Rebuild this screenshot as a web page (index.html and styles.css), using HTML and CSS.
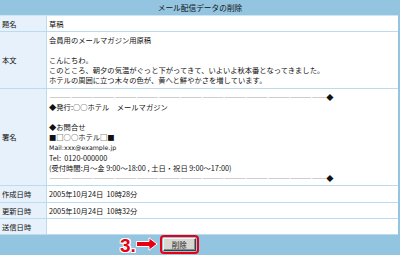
FILE: index.html
```html
<!DOCTYPE html>
<html lang="ja">
<head>
<meta charset="utf-8">
<link rel="stylesheet" href="styles.css">
</head>
<body>
<div class="panel">
  <div class="title">メール配信データの削除</div>
  <div class="grid">
    <div class="lbl">題名</div>
    <div class="val">草稿</div>

    <div class="lbl">本文</div>
    <div class="val">会員用のメールマガジン用原稿<br><br>こんにちわ。<br>このところ、朝夕の気温がぐっと下がってきて、いよいよ秋本番となってきました。<br>ホテルの周囲に立つ木々の色が、黄へと鮮やかさを増しています。</div>

    <div class="lbl">署名</div>
    <div class="val"><span class="rule">――――――――――――――――――――――――――――――――――――――<b>◆</b></span><br>◆発行:○○ホテル　メールマガジン<br><br>◆お問合せ<br>■□○○ホテル□■<br><span class="latin">Mail:xxx@example.jp</span><br>Tel:&nbsp; 0120-000000<br>(受付時間:月～金 9:00～18:00 , 土日・祝日 9:00～17:00)<br><span class="rule">――――――――――――――――――――――――――――――――――――――<b>◆</b></span></div>

    <div class="lbl">作成日時</div>
    <div class="val">2005年10月24日&nbsp; 10時28分</div>

    <div class="lbl">更新日時</div>
    <div class="val">2005年10月24日&nbsp; 10時32分</div>

    <div class="lbl">送信日時</div>
    <div class="val"></div>
  </div>
  <div class="footer">
    <span class="step">3.</span>
    <svg class="arrow" width="22" height="14" viewBox="0 0 22 14">
      <polygon points="0.5,4.5 13,4.5 13,0.8 21.2,7 13,13.2 13,9.5 0.5,9.5" fill="#e60012" stroke="#ffffff" stroke-width="1"/>
    </svg>
    <span class="hl"><button class="btn">削除</button></span>
  </div>
</div>
</body>
</html>
```

FILE: styles.css
```css
html, body {
  margin: 0;
  padding: 0;
}
body {
  width: 400px;
  height: 255px;
  overflow: hidden;
  font-family: "Noto Sans CJK JP", "Noto Sans", sans-serif;
  color: #111111;
}
.panel {
  width: 400px;
  height: 255px;
  box-sizing: border-box;
  background: #93c5e1;
  padding-right: 2px;
  display: flex;
  flex-direction: column;
}
.title {
  height: 15px;
  line-height: 15px;
  font-size: 7.7px;
  text-align: center;
  padding-left: 2px;
}
.grid {
  display: grid;
  grid-template-columns: 46px 1fr;
  gap: 1px;
  background: #bcdbef;
  border-top: 1px solid #cfe5f4;
  border-bottom: 1px solid #bcdbef;
  font-size: 7.3px;
  line-height: 10.1px;
}
.lbl {
  background: #e7f1fb;
  padding: 3px 2px 2px 2px;
  display: flex;
  align-items: center;
  min-height: 10px;
}
.val {
  background: #ffffff;
  padding: 3px 2px 2px 2px;
  min-height: 10px;
  white-space: nowrap;
}
.rule {
  color: #3a3a3a;
  font-weight: bold;
}
.rule b {
  color: #111;
}
.latin {
  font-family: "DejaVu Sans", sans-serif;
  font-size: 6.3px;
}
.footer {
  flex: 1;
  display: flex;
  align-items: center;
  padding-left: 120px;
  padding-bottom: 1px;
}
.step {
  font-family: "Liberation Sans", Arial, sans-serif;
  font-weight: bold;
  font-size: 19px;
  line-height: 19px;
  color: #e60012;
  text-shadow: 1px 0 #fff, -1px 0 #fff, 0 1px #fff, 0 -1px #fff, 1px 1px #fff, -1px -1px #fff, 1px -1px #fff, -1px 1px #fff;
  margin-top: 1px;
}
.arrow {
  display: block;
  margin-top: -1px;
}
.hl {
  display: flex;
  align-items: center;
  justify-content: center;
  margin-left: 2px;
  width: 35px;
  height: 15px;
  border: 2px solid #e60012;
  border-radius: 4px;
  background: #93c5e1;
}
.btn {
  width: 33px;
  height: 13px;
  padding: 0;
  margin: 0;
  font-family: "Noto Sans CJK JP", sans-serif;
  font-size: 7.5px;
  line-height: 11px;
  color: #222;
  background: #d8d6d0;
  border: 1px solid;
  border-color: #f4f4f4 #404040 #404040 #f4f4f4;
  box-shadow: inset -1px -1px 0 #888;
}
```
